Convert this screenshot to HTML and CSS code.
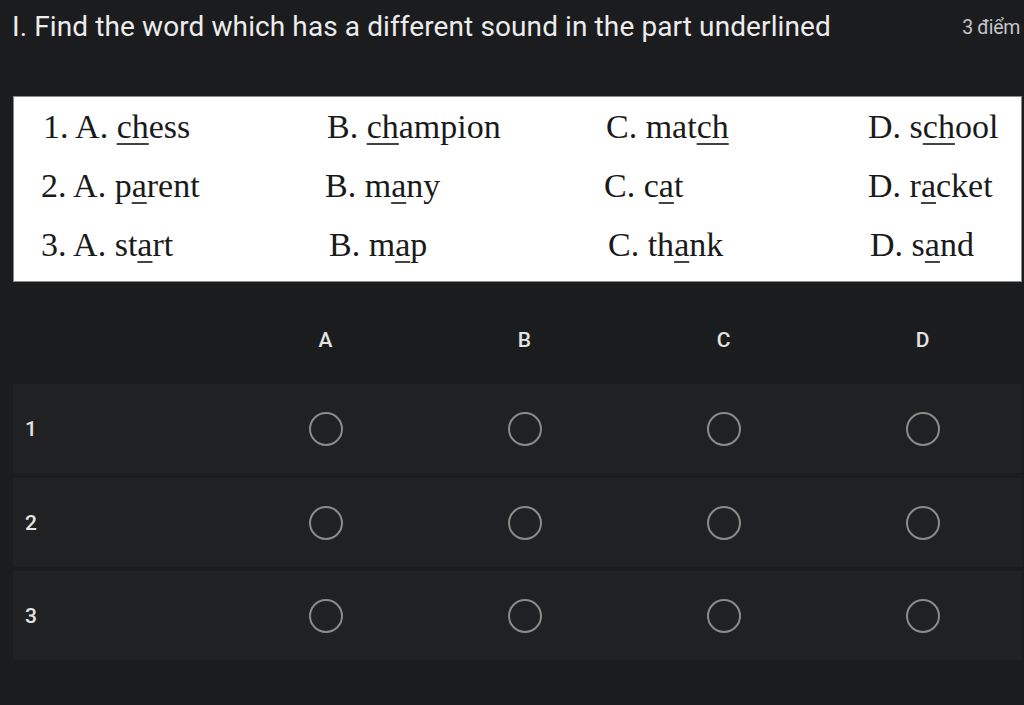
FILE: index.html
```html
<!DOCTYPE html>
<html>
<head>
<meta charset="utf-8">
<link rel="stylesheet" href="styles.css">
</head>
<body>
<div class="page">
  <div class="header">
    <div class="title">I. Find the word which has a different sound in the part underlined</div>
    <div class="points">3 điểm</div>
  </div>
  <div class="picture">
    <div class="prow">
      <span class="c1">1. A. <u>ch</u>ess</span>
      <span class="c2">B. <u>ch</u>ampion</span>
      <span class="c3">C. mat<u>ch</u></span>
      <span class="c4">D. s<u>ch</u>ool</span>
    </div>
    <div class="prow">
      <span class="c1 n2">2. A. p<u>a</u>rent</span>
      <span class="c2 n2">B. m<u>a</u>ny</span>
      <span class="c3 n2">C. c<u>a</u>t</span>
      <span class="c4">D. r<u>a</u>cket</span>
    </div>
    <div class="prow">
      <span class="c1 n2">3. A. st<u>a</u>rt</span>
      <span class="c2 n3">B. m<u>a</u>p</span>
      <span class="c3 n3">C. th<u>a</u>nk</span>
      <span class="c4 n4">D. s<u>a</u>nd</span>
    </div>
  </div>
  <div class="grid">
    <div class="ghead">
      <div class="lab"></div>
      <div class="col">A</div>
      <div class="col">B</div>
      <div class="col">C</div>
      <div class="col">D</div>
    </div>
    <div class="grow">
      <div class="lab">1</div>
      <div class="col"><span class="radio"></span></div>
      <div class="col"><span class="radio"></span></div>
      <div class="col"><span class="radio"></span></div>
      <div class="col"><span class="radio"></span></div>
    </div>
    <div class="grow">
      <div class="lab">2</div>
      <div class="col"><span class="radio"></span></div>
      <div class="col"><span class="radio"></span></div>
      <div class="col"><span class="radio"></span></div>
      <div class="col"><span class="radio"></span></div>
    </div>
    <div class="grow">
      <div class="lab">3</div>
      <div class="col"><span class="radio"></span></div>
      <div class="col"><span class="radio"></span></div>
      <div class="col"><span class="radio"></span></div>
      <div class="col"><span class="radio"></span></div>
    </div>
  </div>
</div>
</body>
</html>
```
FILE: styles.css
```css
html, body {
  margin: 0;
  padding: 0;
  background: #1b1c1e;
  height: 705px;
  overflow: hidden;
}
.page {
  width: 1024px;
  font-family: Roboto, "Open Sans", sans-serif;
  color: #e8eaed;
}
.header {
  display: flex;
  justify-content: space-between;
  align-items: flex-start;
  padding: 9px 4px 0 12px;
  height: 86px;
  box-sizing: border-box;
}
.title {
  font-size: 28px;
  letter-spacing: 0.1px;
  line-height: 36px;
  color: #ececec;
}
.points {
  font-size: 19.5px;
  line-height: 24px;
  margin-top: 7px;
  letter-spacing: -0.3px;
  color: #c4c6c9;
}
.picture {
  margin-top: 10px;
  margin-left: 13px;
  width: 1007px;
  height: 184px;
  background: #fff;
  border: 1px solid #8a8a8a;
  font-family: "Liberation Serif", "Times New Roman", serif;
  font-size: 34px;
  color: #1a1a1a;
}
.prow {
  height: 59px;
  display: grid;
  grid-template-columns: 284px 279px 262px 1fr;
  padding-left: 29px;
  line-height: 59px;
}
.prow u {
  text-decoration-thickness: 2px;
  text-underline-offset: 5px;
  text-decoration-color: #444;
}
.n2 { margin-left: -2px; }
.n3 { margin-left: 2px; }
.n4 { margin-left: 2px; }
.grid {
  margin-top: 36px;
  padding: 0 2px 0 13px;
}
.ghead, .grow {
  display: grid;
  grid-template-columns: 213px repeat(4, 199px);
  align-items: center;
}
.ghead {
  height: 66px;
  align-items: start;
  padding-top: 10px;
  box-sizing: border-box;
  line-height: 24px;
  font-size: 21px;
  font-weight: 500;
  color: #e3e3e3;
}
.grow {
  height: 89px;
  background: #1f2123;
  margin-bottom: 5px;
  font-size: 21px;
  font-weight: 500;
  color: #e3e3e3;
}
.grow:nth-child(3) { margin-bottom: 4px; }
.lab {
  padding-left: 12px;
}
.col {
  display: flex;
  justify-content: center;
  align-items: center;
}
.radio {
  display: block;
  width: 30px;
  height: 30px;
  border: 2px solid #8d8b88;
  border-radius: 50%;
}
```
